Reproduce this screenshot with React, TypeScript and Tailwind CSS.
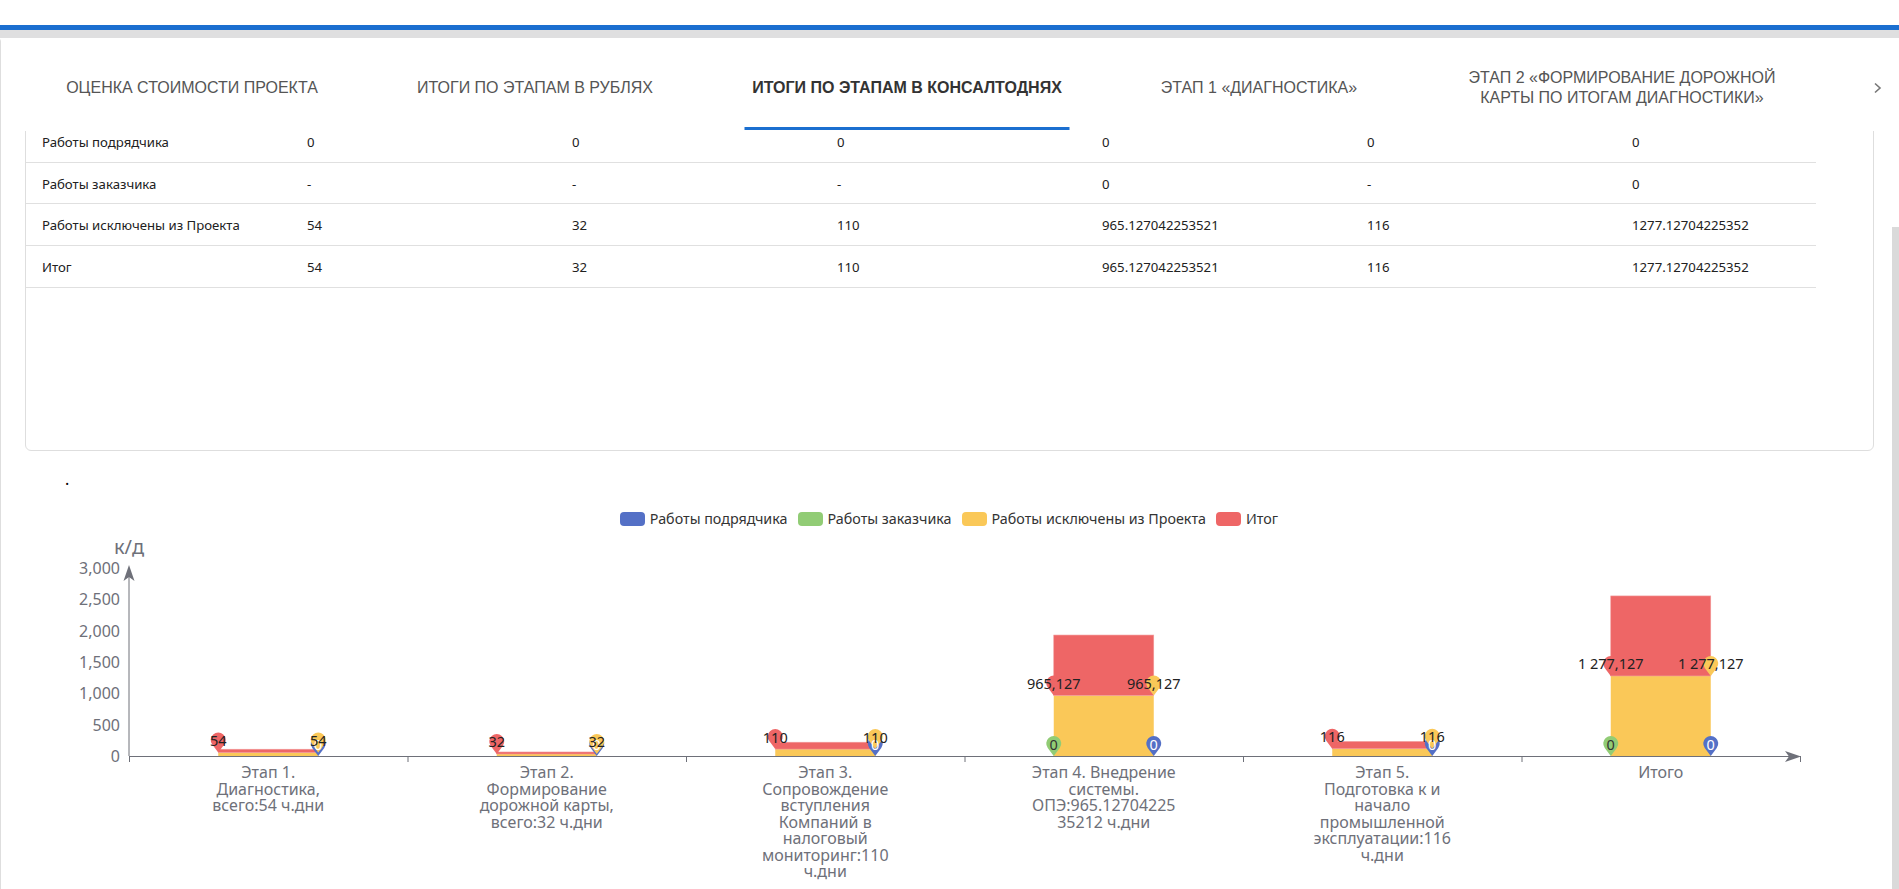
import React from "react";

const tabs = [
  { label: ["ОЦЕНКА СТОИМОСТИ ПРОЕКТА"], w: "w-[350px]" },
  { label: ["ИТОГИ ПО ЭТАПАМ В РУБЛЯХ"], w: "w-[336px]" },
  { label: ["ИТОГИ ПО ЭТАПАМ В КОНСАЛТОДНЯХ"], w: "w-[408px]", active: true },
  { label: ["ЭТАП 1 «ДИАГНОСТИКА»"], w: "w-[296px]" },
  { label: ["ЭТАП 2 «ФОРМИРОВАНИЕ ДОРОЖНОЙ", "КАРТЫ ПО ИТОГАМ ДИАГНОСТИКИ»"], w: "w-[430px]" },
];

const rows = [
  { name: "Работы подрядчика", vals: ["0", "0", "0", "0", "0", "0"], h: "h-[42px]" },
  { name: "Работы заказчика", vals: ["-", "-", "-", "0", "-", "0"], h: "h-[41px]" },
  {
    name: "Работы исключены из Проекта",
    vals: ["54", "32", "110", "965.127042253521", "116", "1277.12704225352"],
    h: "h-[42px]",
  },
  {
    name: "Итог",
    vals: ["54", "32", "110", "965.127042253521", "116", "1277.12704225352"],
    h: "h-[42px]",
  },
];

const legend = [
  { label: "Работы подрядчика", color: "bg-[#5470c6]" },
  { label: "Работы заказчика", color: "bg-[#91cc75]" },
  { label: "Работы исключены из Проекта", color: "bg-[#fac858]" },
  { label: "Итог", color: "bg-[#ee6666]" },
];

// chart geometry (page coords)
const X0 = 129;
const XEND = 1800;
const Y0 = 756;
const CAT = 278.5;
const yv = (v: number) => Y0 - (v * 188) / 3000;
const cx = (i: number) => X0 + CAT * (i + 0.5);

const cats = [
  { lines: ["Этап 1.", "Диагностика,", "всего:54 ч.дни"], v: 54, label: "54", green: false },
  { lines: ["Этап 2.", "Формирование", "дорожной карты,", "всего:32 ч.дни"], v: 32, label: "32", green: false },
  {
    lines: ["Этап 3.", "Сопровождение", "вступления", "Компаний в", "налоговый", "мониторинг:110", "ч.дни"],
    v: 110,
    label: "110",
    green: false,
  },
  {
    lines: ["Этап 4. Внедрение", "системы.", "ОПЭ:965.12704225", "35212 ч.дни"],
    v: 965.127,
    label: "965,127",
    green: true,
  },
  {
    lines: ["Этап 5.", "Подготовка к и", "начало", "промышленной", "эксплуатации:116", "ч.дни"],
    v: 116,
    label: "116",
    green: false,
  },
  { lines: ["Итого"], v: 1277.127, label: "1 277,127", green: true },
];

function pinPath(x: number, tip: number) {
  const cy = tip - 12.5;
  return `M${x},${tip} L${x - 6},${cy + 4.5} A7.5 7.5 0 1 1 ${x + 6},${cy + 4.5} Z`;
}

function Chart() {
  const pins: { x: number; tip: number; color: string; text: string; textColor: string }[] = [];
  cats.forEach((c, i) => {
    const l = cx(i) - 50;
    const r = cx(i) + 50;
    pins.push({ x: r, tip: Y0, color: "#5470c6", text: "0", textColor: "#ffffff" });
    if (c.green) pins.push({ x: l, tip: Y0, color: "#91cc75", text: "0", textColor: "#333333" });
    pins.push({ x: r, tip: yv(c.v), color: "#fac858", text: c.label, textColor: "#222222" });
    pins.push({ x: l, tip: yv(c.v), color: "#ee6666", text: c.label, textColor: "#222222" });
  });

  return (
    <svg
      width={1898}
      height={356}
      viewBox="1 533 1898 356"
      className="block overflow-visible font-['Noto_Sans',sans-serif]"
    >
      {/* y axis name */}
      <text x={X0} y={546} fontSize={20} fill="#6e7079" textAnchor="middle" dominantBaseline="central">
        к/д
      </text>
      {/* y labels */}
      {[0, 500, 1000, 1500, 2000, 2500, 3000].map((v) => (
        <text
          key={v}
          x={120}
          y={yv(v)}
          fontSize={16}
          fill="#6e7079"
          textAnchor="end"
          dominantBaseline="central"
        >
          {v === 0 ? "0" : v.toLocaleString("en-US")}
        </text>
      ))}

      {/* bars */}
      {cats.map((c, i) => {
        const l = cx(i) - 50;
        const h = (c.v * 188) / 3000;
        return (
          <g key={i}>
            <rect x={l} y={Y0 - h} width={100} height={h} fill="#fac858" />
            <rect x={l} y={Y0 - 2 * h} width={100} height={h} fill="#ee6666" stroke="#f29c9c" strokeWidth={0.6} />
          </g>
        );
      })}

      {/* axes */}
      <line x1={X0} y1={Y0} x2={X0} y2={570} stroke="#6e7079" strokeWidth={1} />
      <path d={`M${X0},565 L${X0 + 5.5},581 L${X0},577 L${X0 - 5.5},581 Z`} fill="#6e7079" />
      <line x1={X0} y1={Y0 + 0.5} x2={XEND - 6} y2={Y0 + 0.5} stroke="#6e7079" strokeWidth={1} />
      <path d={`M${XEND + 1},${Y0 + 0.5} L${XEND - 15},${Y0 - 5} L${XEND - 11},${Y0 + 0.5} L${XEND - 15},${Y0 + 6} Z`} fill="#6e7079" />
      {[0, 1, 2, 3, 4, 5, 6].map((k) => (
        <line
          key={k}
          x1={X0 + CAT * k + 0.5}
          y1={Y0}
          x2={X0 + CAT * k + 0.5}
          y2={Y0 + 6}
          stroke="#6e7079"
          strokeWidth={1}
        />
      ))}

      {/* category labels */}
      {cats.map((c, i) => (
        <text key={i} x={cx(i)} fontSize={16} fill="#6e7079" textAnchor="middle">
          {c.lines.map((ln, j) => (
            <tspan key={j} x={cx(i)} y={772 + j * 16.5} dominantBaseline="central">
              {ln}
            </tspan>
          ))}
        </text>
      ))}

      {/* mark points */}
      {pins.map((p, i) => (
        <path key={i} d={pinPath(p.x, p.tip)} fill={p.color} />
      ))}
      {pins.map((p, i) => (
        <text
          key={i}
          x={p.x}
          y={p.tip - 12.5}
          fontSize={14.5}
          fill={p.textColor}
          textAnchor="middle"
          dominantBaseline="central"
        >
          {p.text}
        </text>
      ))}
    </svg>
  );
}

export default function App() {
  return (
    <div className="relative h-[889px] w-[1899px] overflow-hidden bg-white font-['Noto_Sans',sans-serif]">
      <div className="h-[25px] bg-white" />
      <div className="h-[5px] bg-[#1b6fd0]" />
      <div className="h-[8px] bg-[#dfdfe0]" />

      <div className="flex h-[851px] flex-col rounded-tl-[4px] border-l border-[#dedede] bg-white">
        {/* tabs */}
        <div className="flex h-[93px] shrink-0 items-stretch bg-white pl-[16px] font-['Liberation_Sans',Arial,sans-serif] text-[16px]">
          {tabs.map((t, i) => (
            <div
              key={i}
              className={`relative flex ${t.w} shrink-0 items-center justify-center pt-[7px] text-center leading-[20px] ${
                t.active ? "font-bold text-[#333]" : "text-[#555]"
              }`}
            >
              <div>
                {t.label.map((l, j) => (
                  <div key={j}>{l}</div>
                ))}
              </div>
              {t.active && (
                <div className="absolute bottom-[1px] left-1/2 h-[3px] w-[325px] -translate-x-1/2 bg-[#1b6fd0]" />
              )}
            </div>
          ))}
          <div className="flex-1" />
          <div className="mr-[1px] flex w-[40px] shrink-0 items-center justify-center pt-[7px]">
            <svg width="10" height="12" viewBox="0 0 10 12">
              <polyline points="2,1.5 7,6 2,10.5" fill="none" stroke="#777" strokeWidth="1.6" />
            </svg>
          </div>
        </div>

        {/* scroll content */}
        <div className="flex-1 overflow-hidden">
          <div className="-mt-[11px] ml-[24px] h-[331px] w-[1849px] rounded-[6px] border border-[#dedede] bg-white">
            <div className="w-[1790px] text-[13.2px] text-[#212121]">
              {rows.map((r) => (
                <div
                  key={r.name}
                  className={`grid ${r.h} grid-cols-[265px_265px_265px_265px_265px_265px_1fr] items-center border-b border-[#e0e0e0] pt-[3px]`}
                >
                  <div className="pl-[16px]">{r.name}</div>
                  {r.vals.map((v, j) => (
                    <div key={j} className="pl-[16px]">
                      {v}
                    </div>
                  ))}
                </div>
              ))}
            </div>
          </div>

          <div className="h-[54px] pl-[64px] pt-[20px] text-[16px] leading-[16px] text-black">.</div>

          <div className="ml-[24px] flex h-[28px] w-[1848px] items-center justify-center gap-[10px] text-[14.3px] text-[#333]">
            {legend.map((l) => (
              <div key={l.label} className="flex items-center gap-[5px]">
                <span className={`inline-block h-[14px] w-[25px] rounded-[4px] ${l.color}`} />
                <span>{l.label}</span>
              </div>
            ))}
          </div>

          <Chart />
        </div>
      </div>

      {/* scrollbar thumb */}
      <div className="absolute right-0 top-[227px] h-[700px] w-[7px] bg-[#dadada]" />
    </div>
  );
}
